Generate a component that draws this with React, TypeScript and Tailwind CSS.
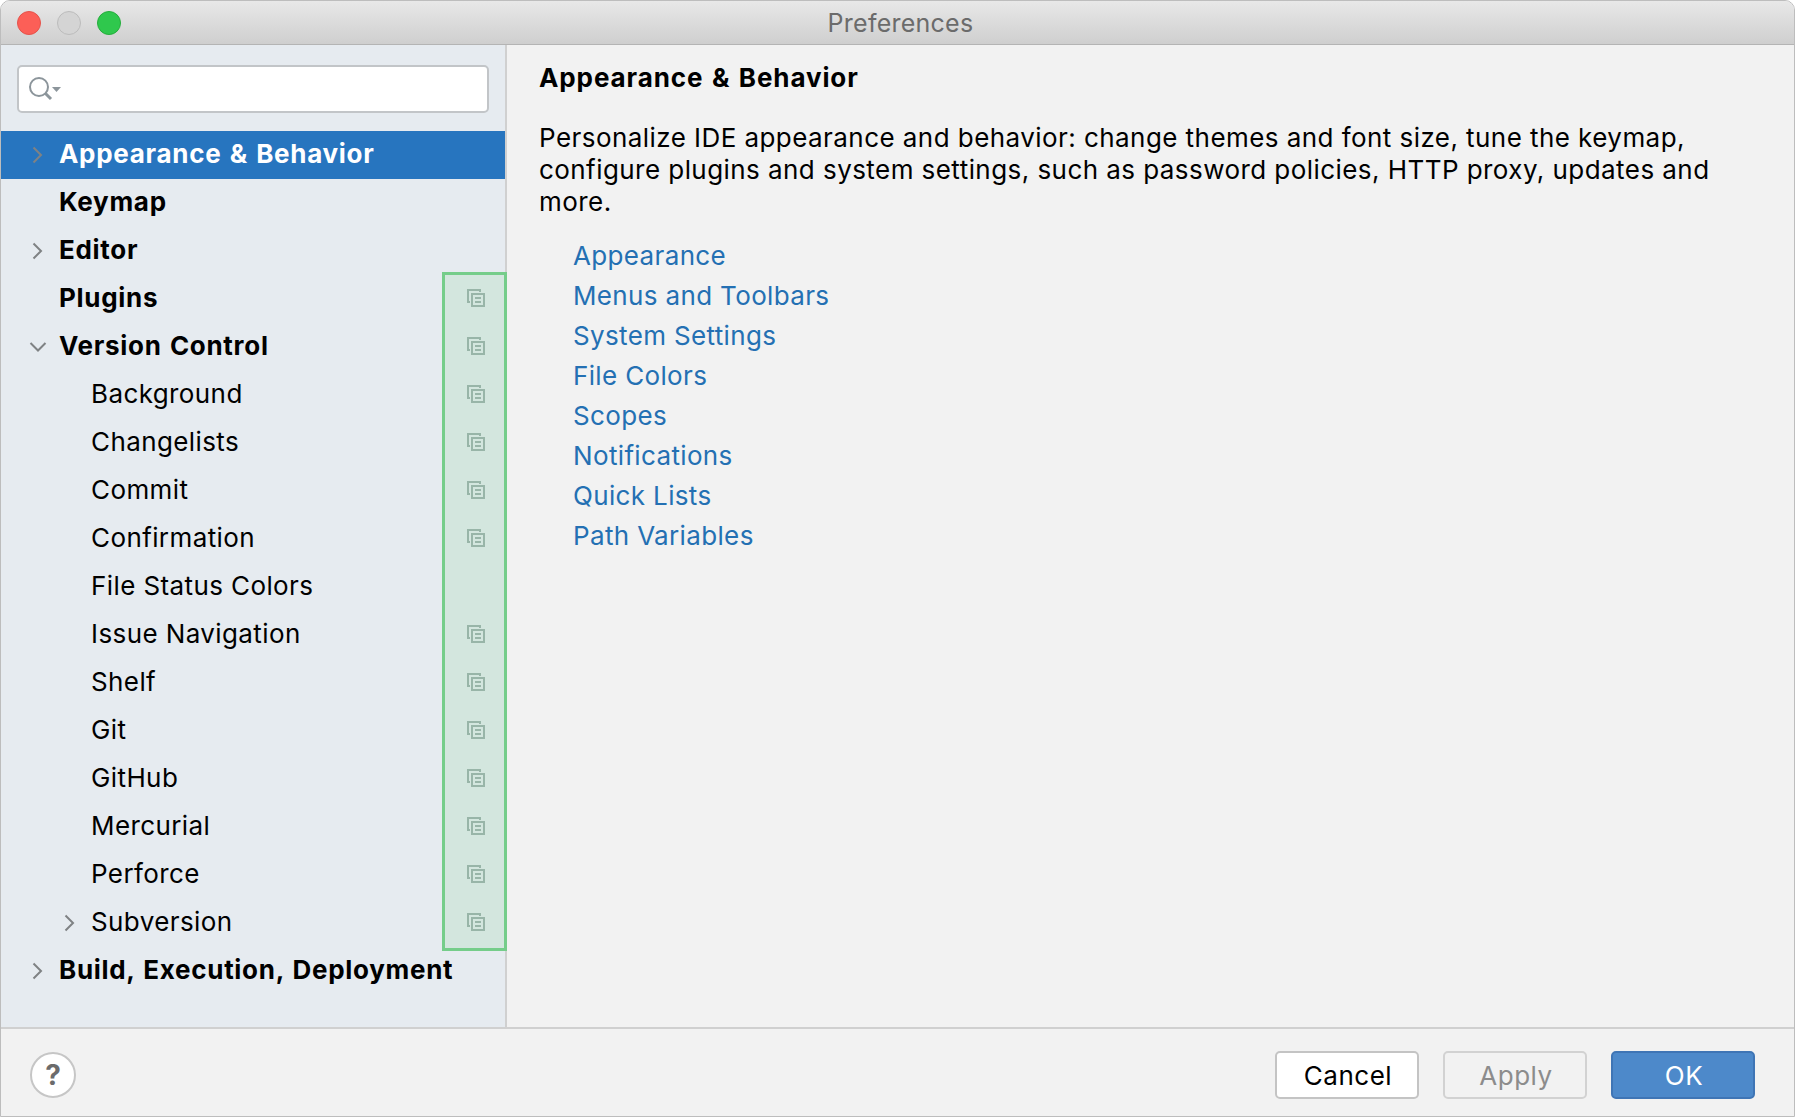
const rows = [
  { label: "Keymap", bold: true },
  { label: "Editor", bold: true, arrow: "right" },
  { label: "Plugins", bold: true, copy: true },
  { label: "Version Control", bold: true, arrow: "down", copy: true },
  { label: "Background", copy: true },
  { label: "Changelists", copy: true },
  { label: "Commit", copy: true },
  { label: "Confirmation", copy: true },
  { label: "File Status Colors" },
  { label: "Issue Navigation", copy: true },
  { label: "Shelf", copy: true },
  { label: "Git", copy: true },
  { label: "GitHub", copy: true },
  { label: "Mercurial", copy: true },
  { label: "Perforce", copy: true },
  { label: "Subversion", arrow: "right", copy: true, nested: true },
  { label: "Build, Execution, Deployment", bold: true, arrow: "right" },
];

const links = [
  "Appearance",
  "Menus and Toolbars",
  "System Settings",
  "File Colors",
  "Scopes",
  "Notifications",
  "Quick Lists",
  "Path Variables",
];

function Chevron({ dir }: { dir: string }) {
  return (
    <svg width="20" height="20" viewBox="0 0 20 20" fill="none" stroke="#7f8284" strokeWidth="2">
      {dir === "down" ? <path d="M2.500 6 10 13.500 17.500 6" /> : <path d="M5.500 2.500 13 10 5.500 17.500" />}
    </svg>
  );
}

function CopyIcon() {
  return (
    <svg width="18" height="18" viewBox="0 0 18 18" fill="none" stroke="#9fb0af" strokeWidth="2" className="absolute right-[20px] top-[14px]">
      <path d="M13 3V1H1V13H3" />
      <rect x="5" y="5" width="12" height="12" />
      <path d="M8 9H14M8 13H14" />
    </svg>
  );
}

function Row({ row }: { row: (typeof rows)[number] }) {
  const sub = !row.bold;
  return (
    <div className="relative flex h-[48px] items-center">
      <div className={`flex w-[20px] shrink-0 ${sub ? "ml-[59px]" : "ml-[27px]"}`}>
        {row.arrow ? <Chevron dir={row.arrow} /> : null}
      </div>
      <span className={sub ? "mb-[3px] ml-[11px] tracking-[0.4px]" : "mb-[3px] ml-[11px] font-bold tracking-[0.7px] [word-spacing:1.5px]"}>
        {row.label}
      </span>
      {row.copy ? <CopyIcon /> : null}
    </div>
  );
}

export default function App() {
  return (
    <div className="relative flex h-[1117px] w-[1795px] flex-col overflow-hidden rounded-t-[10px] border border-[#bdbdbd] bg-[#f2f2f2] font-['Inter',sans-serif] text-[26px] text-black">
      {/* Title bar */}
      <div className="relative flex h-[44px] shrink-0 items-center justify-center border-b border-[#b4b4b4] bg-gradient-to-b from-[#e8e8e8] to-[#cfcfcf]">
        <div className="absolute left-[16px] top-[10px] flex gap-[16px]">
          <div className="h-[24px] w-[24px] rounded-full border border-[#e5534b] bg-[#fc5f57]" />
          <div className="h-[24px] w-[24px] rounded-full border border-[#bcbcbc] bg-[#d4d4d4]" />
          <div className="h-[24px] w-[24px] rounded-full border border-[#25ad3c] bg-[#2fc84d]" />
        </div>
        <span className="pl-[6px] pt-[3px] text-[25px] tracking-[0.25px] text-[#6b6b6b]">Preferences</span>
      </div>

      <div className="flex min-h-0 flex-1">
        {/* Sidebar */}
        <div className="relative w-[506px] shrink-0 border-r-2 border-[#d0d0d0] bg-[#e6ebf0]">
          <div className="mx-[16px] mb-[18px] mt-[20px] flex h-[48px] items-center rounded-[5px] border-2 border-[#c2c5c8] bg-white pl-[9px]">
            <svg width="34" height="26" viewBox="0 0 34 26" fill="none" stroke="#8c959b" strokeWidth="2">
              <circle cx="11" cy="11" r="9" />
              <path d="M17 17 23 23" strokeWidth="3" />
              <path d="M24 11H33L28.500 16Z" fill="#8c959b" stroke="none" />
            </svg>
          </div>

          <div className="flex h-[48px] items-center bg-[#2775bf] font-bold text-white">
            <div className="ml-[27px] flex w-[20px] shrink-0">
              <Chevron dir="right" />
            </div>
            <span className="mb-[3px] ml-[11px] tracking-[0.7px] [word-spacing:1.5px]">Appearance &amp; Behavior</span>
          </div>
          {rows.map((row) => (
            <Row key={row.label} row={row} />
          ))}

          {/* Green highlight over the copy icons */}
          <div className="absolute left-[441px] top-[227px] h-[679px] w-[65px] border-[3px] border-[#75cd8a] bg-[#75cd8a]/[0.17]" />
        </div>

        {/* Content */}
        <div className="min-w-0 flex-1 pl-[32px] pr-[40px] pt-[13px]">
          <h1 className="font-bold leading-[40px] tracking-[0.9px] [word-spacing:1.5px]">Appearance &amp; Behavior</h1>
          <p className="mt-[24px] leading-[32px] tracking-[0.44px]">
            Personalize IDE appearance and behavior: change themes and font size, tune the keymap,
            <br />
            configure plugins and system settings, such as password policies, HTTP proxy, updates and
            <br />
            more.
          </p>
          <div className="ml-[34px] mt-[18px] flex flex-col">
            {links.map((link) => (
              <a key={link} className="h-[40px] leading-[40px] tracking-[0.35px] text-[#2470b3]">
                {link}
              </a>
            ))}
          </div>
        </div>
      </div>

      {/* Footer */}
      <div className="flex h-[89px] shrink-0 items-center justify-between border-t-2 border-[#d0d0d0] pl-[29px] pr-[39px] pt-[5px]">
        <div className="flex h-[46px] w-[46px] items-center justify-center rounded-full border-2 border-[#c6c6c6] bg-white text-[28px] font-bold text-[#6b6b6b]">
          ?
        </div>
        <div className="flex gap-[24px] tracking-[0.5px]">
          <div className="flex h-[48px] w-[144px] items-center justify-center rounded-[5px] border-2 border-[#c4c4c4] bg-white pl-[2px]">Cancel</div>
          <div className="flex h-[48px] w-[144px] items-center justify-center rounded-[5px] border-2 border-[#d2d2d2] pl-[2px] text-[#8c8c8c]">Apply</div>
          <div className="flex h-[48px] w-[144px] items-center justify-center rounded-[5px] border-2 border-[#3f75b5] bg-[#4d89ca] pl-[2px] text-white">OK</div>
        </div>
      </div>
    </div>
  );
}
